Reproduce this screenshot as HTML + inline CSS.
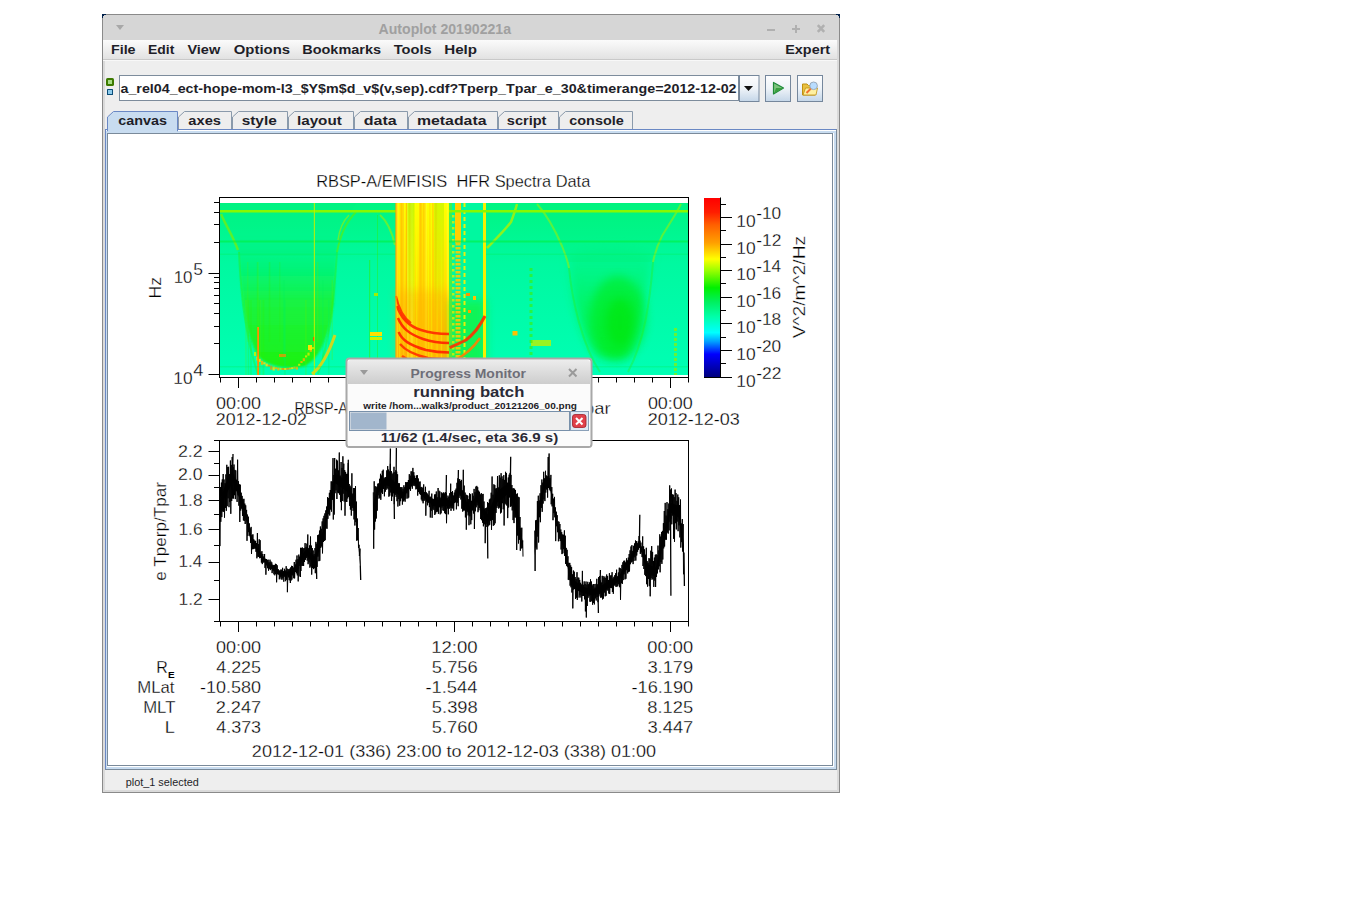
<!DOCTYPE html><html><head><meta charset="utf-8"><style>html,body{margin:0;padding:0;background:#fff;}svg{display:block;font-family:"Liberation Sans",sans-serif;}</style></head><body>
<svg width="1345" height="916" viewBox="0 0 1345 916">
<defs>
<linearGradient id="menu" x1="0" y1="0" x2="0" y2="1"><stop offset="0" stop-color="#fbfbfb"/><stop offset="1" stop-color="#e2e2e2"/></linearGradient>
<linearGradient id="btn" x1="0" y1="0" x2="0" y2="1"><stop offset="0" stop-color="#fdfdfe"/><stop offset="0.5" stop-color="#eef3f8"/><stop offset="1" stop-color="#c4d6e8"/></linearGradient>
<linearGradient id="dlgtitle" x1="0" y1="0" x2="0" y2="1"><stop offset="0" stop-color="#ececec"/><stop offset="1" stop-color="#cdcdcd"/></linearGradient>
<linearGradient id="cbar" x1="0" y1="0" x2="0" y2="1">
<stop offset="0" stop-color="#ff0000"/><stop offset="0.08" stop-color="#ff1e00"/><stop offset="0.15" stop-color="#ff6000"/><stop offset="0.25" stop-color="#ffa000"/><stop offset="0.34" stop-color="#ffff00"/><stop offset="0.40" stop-color="#a0ff00"/><stop offset="0.50" stop-color="#00f000"/><stop offset="0.58" stop-color="#00f060"/><stop offset="0.66" stop-color="#00ffa8"/><stop offset="0.75" stop-color="#00ffff"/><stop offset="0.80" stop-color="#00a0ff"/><stop offset="0.87" stop-color="#0000ff"/><stop offset="1" stop-color="#00007a"/></linearGradient>
<linearGradient id="spbase" x1="0" y1="0" x2="0" y2="1"><stop offset="0" stop-color="#00f582"/><stop offset="0.35" stop-color="#00f9a0"/><stop offset="1" stop-color="#00ffb4"/></linearGradient>
<linearGradient id="ugreen" x1="0" y1="0" x2="0" y2="1"><stop offset="0" stop-color="#00f070" stop-opacity="0.0"/><stop offset="0.2" stop-color="#00f060" stop-opacity="0.5"/><stop offset="0.5" stop-color="#20f020" stop-opacity="0.75"/><stop offset="1" stop-color="#20f000" stop-opacity="0.9"/></linearGradient>
<linearGradient id="ugreen2" x1="0" y1="0" x2="0" y2="1"><stop offset="0" stop-color="#00f080" stop-opacity="0.3"/><stop offset="0.5" stop-color="#00f040" stop-opacity="0.6"/><stop offset="1" stop-color="#00ee20" stop-opacity="0.7"/></linearGradient>
<linearGradient id="fadeg" x1="0" y1="0" x2="0" y2="1"><stop offset="0" stop-color="#a8f000" stop-opacity="0.6"/><stop offset="0.6" stop-color="#c0f000" stop-opacity="0.4"/><stop offset="1" stop-color="#c0f000" stop-opacity="0"/></linearGradient>
<filter id="blur1" x="-10%" y="-10%" width="120%" height="120%"><feGaussianBlur stdDeviation="1.2"/></filter>
<linearGradient id="ygband" x1="0" y1="0" x2="0" y2="1"><stop offset="0" stop-color="#ffff00"/><stop offset="0.5" stop-color="#ffe000"/><stop offset="1" stop-color="#ffb000"/></linearGradient>
<filter id="blur2" x="-20%" y="-20%" width="140%" height="140%"><feGaussianBlur stdDeviation="2"/></filter>
<filter id="blur4" x="-30%" y="-30%" width="160%" height="160%"><feGaussianBlur stdDeviation="5"/></filter>
<clipPath id="spclip"><rect x="220" y="203" width="468" height="172"/></clipPath>
<clipPath id="lpclip"><rect x="220" y="441" width="468" height="180"/></clipPath>
</defs>
<rect x="0" y="0" width="1345" height="916" fill="#ffffff"/>
<rect x="102" y="14" width="738" height="779" fill="#8a8a8a"/>
<rect x="103" y="15" width="736" height="777" fill="#dadada"/>
<rect x="102" y="14" width="4" height="1" fill="#00204a"/><rect x="102" y="14" width="1" height="4" fill="#00204a"/><rect x="836" y="14" width="4" height="1" fill="#00204a"/><rect x="839" y="14" width="1" height="4" fill="#00204a"/>
<rect x="105" y="40" width="732" height="750" fill="#eeeeee"/>
<rect x="103" y="15" width="736" height="25" fill="#d6d6d6"/>
<rect x="103" y="15" width="1" height="1" fill="#00204a"/><rect x="838" y="15" width="1" height="1" fill="#00204a"/>
<path d="M116 25 L124 25 L120 30 Z" fill="#a8a8a8"/>
<text x="378.55" y="33.8" font-size="14.5" font-weight="bold" fill="#a0a0a0" textLength="132.46" lengthAdjust="spacingAndGlyphs" xml:space="preserve">Autoplot 20190221a</text>
<rect x="767" y="29" width="8" height="2" fill="#b0b0b0"/>
<rect x="792" y="28" width="8" height="2" fill="#b0b0b0"/><rect x="795" y="25" width="2" height="8" fill="#b0b0b0"/>
<path d="M817.8 25.2 L824.2 31.8 M824.2 25.2 L817.8 31.8" stroke="#b0b0b0" stroke-width="2.6"/>
<rect x="103" y="40" width="734" height="19" fill="url(#menu)"/>
<rect x="103" y="59" width="734" height="1" fill="#c9c9c9"/>
<rect x="103" y="60" width="734" height="1" fill="#f8f8f8"/>
<text x="110.94" y="54" font-size="13.5" font-weight="bold" fill="#1e1e28" textLength="24.65" lengthAdjust="spacingAndGlyphs" xml:space="preserve">File</text>
<text x="147.97" y="54" font-size="13.5" font-weight="bold" fill="#1e1e28" textLength="26.30" lengthAdjust="spacingAndGlyphs" xml:space="preserve">Edit</text>
<text x="187.40" y="54" font-size="13.5" font-weight="bold" fill="#1e1e28" textLength="32.77" lengthAdjust="spacingAndGlyphs" xml:space="preserve">View</text>
<text x="233.79" y="54" font-size="13.5" font-weight="bold" fill="#1e1e28" textLength="56.22" lengthAdjust="spacingAndGlyphs" xml:space="preserve">Options</text>
<text x="302.23" y="54" font-size="13.5" font-weight="bold" fill="#1e1e28" textLength="78.86" lengthAdjust="spacingAndGlyphs" xml:space="preserve">Bookmarks</text>
<text x="393.74" y="54" font-size="13.5" font-weight="bold" fill="#1e1e28" textLength="37.94" lengthAdjust="spacingAndGlyphs" xml:space="preserve">Tools</text>
<text x="444.19" y="54" font-size="13.5" font-weight="bold" fill="#1e1e28" textLength="32.84" lengthAdjust="spacingAndGlyphs" xml:space="preserve">Help</text>
<text x="785.24" y="54" font-size="13.5" font-weight="bold" fill="#1e1e28" textLength="44.84" lengthAdjust="spacingAndGlyphs" xml:space="preserve">Expert</text>
<rect x="106" y="78" width="8" height="8" rx="1.6" fill="#3c7a00"/><rect x="108" y="80" width="4" height="4" fill="#a6dc84"/>
<rect x="107" y="89" width="6" height="6" rx="0.6" fill="#0a4c78"/><rect x="108" y="90" width="4" height="4" fill="#8ccbec"/>
<rect x="119.5" y="75.5" width="619" height="25" fill="#ffffff" stroke="#7d8c9c" stroke-width="1"/>
<text x="120.48" y="93" font-size="13.5" font-weight="bold" fill="#1e1e28" textLength="616.09" lengthAdjust="spacingAndGlyphs" xml:space="preserve">a_rel04_ect-hope-mom-l3_$Y$m$d_v$(v,sep).cdf?Tperp_Tpar_e_30&amp;timerange=2012-12-02</text>
<rect x="739.5" y="75.5" width="19.5" height="26" fill="url(#btn)" stroke="#75879c" stroke-width="1"/>
<rect x="765.5" y="75.5" width="25" height="26" fill="url(#btn)" stroke="#75879c" stroke-width="1"/>
<rect x="797.5" y="75.5" width="25" height="26" fill="url(#btn)" stroke="#75879c" stroke-width="1"/>
<path d="M744 86 L753 86 L748.5 91 Z" fill="#111"/>
<path d="M773.5 82.5 L773.5 94 L783.5 88 Z" fill="#7cc47c" stroke="#1f8a3a" stroke-width="1.2" stroke-linejoin="round"/>
<path d="M776 88 L783 88 L774 93.5 Z" fill="#3aa040"/>
<path d="M802.5 84 L807 84 L808.5 85.5 L815 85.5 L815 95 L802.5 95 Z" fill="#e8c040" stroke="#c09010" stroke-width="1"/>
<path d="M803 95 L805.5 88 L817.5 88 L816 95 Z" fill="#fff0a0" stroke="#c09010" stroke-width="0.8"/>
<circle cx="813.6" cy="85.8" r="3.8" fill="#b8dcff" stroke="#9aaabb" stroke-width="1"/>
<path d="M810.8 88.6 L806.5 93" stroke="#f07030" stroke-width="2"/>
<path d="M178.5 130 L178.5 117 L184.5 111.5 L231.5 111.5 L231.5 130" fill="#eeeeee" stroke="#8a9aab" stroke-width="1"/>
<text x="188.37" y="125" font-size="13.5" font-weight="bold" fill="#1e1e28" textLength="32.63" lengthAdjust="spacingAndGlyphs" xml:space="preserve">axes</text>
<path d="M232.5 130 L232.5 117 L238.5 111.5 L287.5 111.5 L287.5 130" fill="#eeeeee" stroke="#8a9aab" stroke-width="1"/>
<text x="241.66" y="125" font-size="13.5" font-weight="bold" fill="#1e1e28" textLength="35.07" lengthAdjust="spacingAndGlyphs" xml:space="preserve">style</text>
<path d="M288.5 130 L288.5 117 L294.5 111.5 L353.5 111.5 L353.5 130" fill="#eeeeee" stroke="#8a9aab" stroke-width="1"/>
<text x="296.94" y="125" font-size="13.5" font-weight="bold" fill="#1e1e28" textLength="44.85" lengthAdjust="spacingAndGlyphs" xml:space="preserve">layout</text>
<path d="M354.5 130 L354.5 117 L360.5 111.5 L407.5 111.5 L407.5 130" fill="#eeeeee" stroke="#8a9aab" stroke-width="1"/>
<text x="363.84" y="125" font-size="13.5" font-weight="bold" fill="#1e1e28" textLength="32.96" lengthAdjust="spacingAndGlyphs" xml:space="preserve">data</text>
<path d="M408.5 130 L408.5 117 L414.5 111.5 L497.5 111.5 L497.5 130" fill="#eeeeee" stroke="#8a9aab" stroke-width="1"/>
<text x="416.96" y="125" font-size="13.5" font-weight="bold" fill="#1e1e28" textLength="69.54" lengthAdjust="spacingAndGlyphs" xml:space="preserve">metadata</text>
<path d="M498.5 130 L498.5 117 L504.5 111.5 L558.5 111.5 L558.5 130" fill="#eeeeee" stroke="#8a9aab" stroke-width="1"/>
<text x="506.79" y="125" font-size="13.5" font-weight="bold" fill="#1e1e28" textLength="39.69" lengthAdjust="spacingAndGlyphs" xml:space="preserve">script</text>
<path d="M559.5 130 L559.5 117 L565.5 111.5 L632.5 111.5 L632.5 130" fill="#eeeeee" stroke="#8a9aab" stroke-width="1"/>
<text x="569.24" y="125" font-size="13.5" font-weight="bold" fill="#1e1e28" textLength="54.56" lengthAdjust="spacingAndGlyphs" xml:space="preserve">console</text>
<rect x="105" y="129" width="732" height="641" fill="#7a8a9a"/>
<rect x="105" y="129" width="731" height="1" fill="#6a88c4"/><rect x="105" y="129" width="1" height="640" fill="#6a88c4"/>
<rect x="106" y="130" width="730" height="639" fill="#c8dcf0"/>
<rect x="106" y="130" width="730" height="1" fill="#ffffff"/>
<rect x="107" y="133" width="727" height="634" fill="#ffffff"/>
<rect x="107" y="133" width="726" height="633" fill="#7a8a9a"/>
<rect x="108" y="134" width="724" height="631" fill="#ffffff"/>
<path d="M107.5 131 L107.5 117 L113.5 111.5 L177.5 111.5 L177.5 131 Z" fill="#c8dcf0" stroke="#6a88c4" stroke-width="1"/>
<rect x="108" y="129" width="69" height="4" fill="#c8dcf0"/>
<text x="118.24" y="125" font-size="13.5" font-weight="bold" fill="#1e1e28" textLength="48.65" lengthAdjust="spacingAndGlyphs" xml:space="preserve">canvas</text>
<text x="125.80" y="786" font-size="11" fill="#1e1e28" textLength="72.90" lengthAdjust="spacingAndGlyphs" xml:space="preserve">plot_1 selected</text>
<g clip-path="url(#spclip)">
<rect x="219" y="203" width="470" height="172" fill="url(#spbase)"/>
<path d="M219 203 L219 212 C224 222 232 236 240 256 L336 256 C340 236 350 214 356 203 Z" fill="#00f080" opacity="0.35"/>
<path d="M238 236 C241 300 246 335 258 356 C270 368 290 370 305 366 C320 358 330 335 334 300 L337 236 Z" fill="url(#ugreen)" filter="url(#blur1)"/>
<rect x="258.5" y="300" width="1.5" height="80" fill="#30f000" opacity="0.25"/>
<rect x="268.8" y="262" width="1.5" height="80" fill="#30f000" opacity="0.25"/>
<rect x="260.2" y="300" width="1" height="80" fill="#60f000" opacity="0.25"/>
<rect x="245.2" y="300" width="1.5" height="80" fill="#60f000" opacity="0.25"/>
<rect x="256.8" y="262" width="1" height="80" fill="#30f000" opacity="0.25"/>
<rect x="247.7" y="300" width="1.5" height="80" fill="#30f000" opacity="0.25"/>
<rect x="282.9" y="280" width="2" height="80" fill="#00f060" opacity="0.25"/>
<rect x="305.1" y="300" width="1.5" height="80" fill="#60f000" opacity="0.25"/>
<rect x="257.6" y="262" width="1" height="80" fill="#60f000" opacity="0.25"/>
<rect x="283.9" y="300" width="2" height="80" fill="#00f060" opacity="0.25"/>
<rect x="279.3" y="262" width="1" height="80" fill="#30f000" opacity="0.25"/>
<rect x="247.3" y="262" width="1" height="80" fill="#60f000" opacity="0.25"/>
<rect x="262.4" y="300" width="2" height="80" fill="#30f000" opacity="0.25"/>
<rect x="250.2" y="300" width="1.5" height="80" fill="#30f000" opacity="0.25"/>
<rect x="316.8" y="262" width="1.5" height="80" fill="#60f000" opacity="0.25"/>
<rect x="322.1" y="280" width="1.5" height="80" fill="#00f060" opacity="0.25"/>
<rect x="328.0" y="300" width="1.5" height="80" fill="#00f060" opacity="0.25"/>
<rect x="331.5" y="280" width="1.5" height="80" fill="#60f000" opacity="0.25"/>
<path d="M569 256 C571 296 579 332 595 354 C602 360 618 362 628 355 C636 340 645 300 652 256 C630 244 590 244 569 256 Z" fill="url(#ugreen2)" filter="url(#blur4)"/>
<ellipse cx="618" cy="318" rx="28" ry="42" fill="#00e800" opacity="0.45" filter="url(#blur4)"/>
<ellipse cx="620" cy="322" rx="14" ry="24" fill="#00e400" opacity="0.5" filter="url(#blur4)"/>
<path d="M540 203 C552 225 562 245 568 262 L652 262 C658 245 668 225 682 203 Z" fill="#00f070" opacity="0.25"/>
<path d="M221 214 C226 226 232 234 238 250" fill="none" stroke="#80f000" stroke-width="2.5" stroke-opacity="0.7"/>
<path d="M239 252 C241 300 246 340 258 374" fill="none" stroke="#30f000" stroke-width="2.0" stroke-opacity="0.35"/>
<path d="M356 212 C346 222 340 236 337 252" fill="none" stroke="#60f000" stroke-width="2" stroke-opacity="0.6"/>
<path d="M349 215 C342 222 339 232 338 240" fill="none" stroke="#a0f000" stroke-width="1.5" stroke-opacity="0.6"/>
<path d="M380 215 C388 222 392 232 395 245" fill="none" stroke="#a0f000" stroke-width="2" stroke-opacity="0.6"/>
<path d="M337 252 C334 300 330 340 318 374" fill="none" stroke="#30f000" stroke-width="2.0" stroke-opacity="0.35"/>
<path d="M537 204 C546 214 556 232 562 246 C566 256 568 262 569 268" fill="none" stroke="#a0f000" stroke-width="2" stroke-opacity="0.55"/>
<path d="M569 268 C572 300 582 345 600 372" fill="none" stroke="#30f000" stroke-width="2.0" stroke-opacity="0.3"/>
<path d="M681 204 C676 214 668 226 662 236 C658 244 655 252 653 262" fill="none" stroke="#a0f000" stroke-width="2" stroke-opacity="0.55"/>
<path d="M653 262 C650 300 645 340 628 372" fill="none" stroke="#30f000" stroke-width="2.0" stroke-opacity="0.3"/>
<path d="M487 248 C495 240 505 230 511 222 C514 214 516 208 517 204" fill="none" stroke="#b0f000" stroke-width="2.5" stroke-opacity="0.8"/>
<rect x="254.0" y="352.0" width="2.2" height="4" fill="#d0f000" opacity="0.85"/>
<rect x="256.3" y="356.6" width="2.2" height="4" fill="#d0f000" opacity="0.85"/>
<rect x="258.6" y="358.9" width="2.2" height="3" fill="#ffe000" opacity="0.85"/>
<rect x="261.0" y="360.8" width="2.2" height="4" fill="#ffb000" opacity="0.85"/>
<rect x="263.3" y="362.3" width="2.2" height="2" fill="#ffe000" opacity="0.85"/>
<rect x="265.6" y="363.6" width="2.2" height="3" fill="#ffe000" opacity="0.85"/>
<rect x="267.9" y="364.7" width="2.2" height="2" fill="#ff9000" opacity="0.85"/>
<rect x="270.2" y="365.7" width="2.2" height="4" fill="#ff9000" opacity="0.85"/>
<rect x="272.6" y="366.5" width="2.2" height="4" fill="#ffe000" opacity="0.85"/>
<rect x="274.9" y="367.1" width="2.2" height="2" fill="#ffb000" opacity="0.85"/>
<rect x="277.2" y="367.5" width="2.2" height="3" fill="#ffb000" opacity="0.85"/>
<rect x="279.5" y="367.8" width="2.2" height="2" fill="#d0f000" opacity="0.85"/>
<rect x="281.8" y="368.0" width="2.2" height="2" fill="#ff9000" opacity="0.85"/>
<rect x="284.2" y="368.0" width="2.2" height="2" fill="#ffe000" opacity="0.85"/>
<rect x="286.5" y="367.8" width="2.2" height="2" fill="#ff9000" opacity="0.85"/>
<rect x="288.8" y="367.5" width="2.2" height="2" fill="#ffb000" opacity="0.85"/>
<rect x="291.1" y="367.1" width="2.2" height="2" fill="#ffe000" opacity="0.85"/>
<rect x="293.4" y="366.5" width="2.2" height="2" fill="#ffb000" opacity="0.85"/>
<rect x="295.8" y="366.6" width="2.2" height="3" fill="#ffb000" opacity="0.85"/>
<rect x="298.1" y="363.8" width="2.2" height="2" fill="#d0f000" opacity="0.85"/>
<rect x="300.4" y="361.0" width="2.2" height="2" fill="#ffb000" opacity="0.85"/>
<rect x="302.7" y="358.2" width="2.2" height="3" fill="#ffb000" opacity="0.85"/>
<rect x="305.0" y="355.4" width="2.2" height="2" fill="#d0f000" opacity="0.85"/>
<rect x="307.4" y="352.6" width="2.2" height="3" fill="#d0f000" opacity="0.85"/>
<rect x="309.7" y="349.8" width="2.2" height="2" fill="#ffb000" opacity="0.85"/>
<rect x="312.0" y="347.0" width="2.2" height="2" fill="#d0f000" opacity="0.85"/>
<rect x="279" y="354" width="7" height="3" fill="#ff9000" opacity="0.7"/>
<rect x="308" y="345" width="4" height="5" fill="#ffe000"/><rect x="313" y="337" width="2" height="4" fill="#ff4000"/>
<path d="M312 374 C320 368 328 355 335 335" fill="none" stroke="#ffd000" stroke-width="3" opacity="0.8"/>
<rect x="219" y="210" width="470" height="2.5" fill="#88f800"/>
<rect x="219" y="240.5" width="470" height="2" fill="#00f040" opacity="0.6"/>
<rect x="219" y="253.5" width="470" height="1.5" fill="#00f060" opacity="0.35"/>
<rect x="313.8" y="203" width="1.2" height="172" fill="#c0f000" opacity="0.85"/>
<rect x="257.2" y="327" width="1.8" height="48" fill="#ff9000"/>
<rect x="369" y="260" width="1.2" height="115" fill="#30f000" opacity="0.5"/>
<rect x="377" y="215" width="1" height="160" fill="#30f000" opacity="0.4"/>
<rect x="396" y="203" width="53" height="172" fill="url(#ygband)"/>
<rect x="420.0" y="203" width="1.5" height="172" fill="#ffb000" opacity="0.7"/>
<rect x="419.9" y="203" width="1.0" height="172" fill="#ffb000" opacity="0.7"/>
<rect x="405.8" y="203" width="1.5" height="172" fill="#ffb000" opacity="0.7"/>
<rect x="429.4" y="203" width="1.0" height="172" fill="#ffc800" opacity="0.7"/>
<rect x="419.7" y="203" width="1.0" height="172" fill="#ffc800" opacity="0.7"/>
<rect x="424.6" y="203" width="2.0" height="172" fill="#ffff30" opacity="0.7"/>
<rect x="448.1" y="203" width="2.0" height="172" fill="#f8ff00" opacity="0.7"/>
<rect x="435.2" y="203" width="2.0" height="172" fill="#ffc800" opacity="0.7"/>
<rect x="396.8" y="203" width="1.0" height="172" fill="#ffb000" opacity="0.7"/>
<rect x="399.2" y="203" width="1.0" height="172" fill="#ffc800" opacity="0.7"/>
<rect x="427.8" y="203" width="1.5" height="172" fill="#f8ff00" opacity="0.7"/>
<rect x="419.3" y="203" width="2.0" height="172" fill="#ffc800" opacity="0.7"/>
<rect x="408.4" y="203" width="1.5" height="172" fill="#ffe800" opacity="0.7"/>
<rect x="396.2" y="203" width="1.5" height="172" fill="#ffff30" opacity="0.7"/>
<rect x="430.7" y="203" width="2.0" height="172" fill="#f8ff00" opacity="0.7"/>
<rect x="448.8" y="203" width="2.0" height="172" fill="#ffff30" opacity="0.7"/>
<rect x="409.5" y="203" width="2.0" height="172" fill="#ffc800" opacity="0.7"/>
<rect x="411.3" y="203" width="2.0" height="172" fill="#ffff30" opacity="0.7"/>
<rect x="436.6" y="203" width="1.0" height="172" fill="#f8ff00" opacity="0.7"/>
<rect x="440.9" y="203" width="1.0" height="172" fill="#f8ff00" opacity="0.7"/>
<rect x="446.8" y="203" width="1.0" height="172" fill="#ffff30" opacity="0.7"/>
<rect x="407.1" y="203" width="1.5" height="172" fill="#ffff30" opacity="0.7"/>
<rect x="415.9" y="203" width="1.5" height="172" fill="#f8ff00" opacity="0.7"/>
<rect x="399.9" y="203" width="2.0" height="172" fill="#ffc800" opacity="0.7"/>
<rect x="410.3" y="203" width="1.5" height="172" fill="#ffff30" opacity="0.7"/>
<rect x="413.6" y="203" width="1.0" height="172" fill="#f8ff00" opacity="0.7"/>
<rect x="403.1" y="203" width="1.0" height="172" fill="#ffff30" opacity="0.7"/>
<rect x="399.2" y="203" width="1.0" height="172" fill="#f8ff00" opacity="0.7"/>
<rect x="432.2" y="203" width="1.5" height="172" fill="#ffc800" opacity="0.7"/>
<rect x="423.0" y="203" width="1.5" height="172" fill="#ffc800" opacity="0.7"/>
<rect x="449" y="203" width="37" height="172" fill="#00f8a0"/>
<rect x="449" y="300" width="37" height="75" fill="#20f000" opacity="0.45" filter="url(#blur4)"/>
<rect x="449" y="203" width="3" height="172" fill="#60f020" opacity="0.6"/>
<rect x="455" y="203" width="6" height="40" fill="#ffd000"/>
<rect x="455.5" y="243" width="5" height="2.5" fill="#ffc800" opacity="0.9"/>
<rect x="455.5" y="247" width="5" height="2.5" fill="#ffc800" opacity="0.9"/>
<rect x="455.5" y="251" width="5" height="2.5" fill="#ffc800" opacity="0.9"/>
<rect x="455.5" y="255" width="5" height="2.5" fill="#ffc800" opacity="0.9"/>
<rect x="455.5" y="259" width="5" height="2.5" fill="#ffc800" opacity="0.9"/>
<rect x="455.5" y="263" width="5" height="2.5" fill="#ffc800" opacity="0.9"/>
<rect x="455.5" y="267" width="5" height="2.5" fill="#ffc800" opacity="0.9"/>
<rect x="455.5" y="271" width="5" height="2.5" fill="#ffc800" opacity="0.9"/>
<rect x="455.5" y="275" width="5" height="2.5" fill="#ffc800" opacity="0.9"/>
<rect x="455.5" y="279" width="5" height="2.5" fill="#ffc800" opacity="0.9"/>
<rect x="455.5" y="283" width="5" height="2.5" fill="#ffc800" opacity="0.9"/>
<rect x="455.5" y="287" width="5" height="2.5" fill="#ffc800" opacity="0.9"/>
<rect x="455.5" y="291" width="5" height="2.5" fill="#ffc800" opacity="0.9"/>
<rect x="455.5" y="295" width="5" height="2.5" fill="#ffc800" opacity="0.9"/>
<rect x="455.5" y="299" width="5" height="2.5" fill="#ffc800" opacity="0.9"/>
<rect x="455.5" y="303" width="5" height="2.5" fill="#ffc800" opacity="0.9"/>
<rect x="455.5" y="307" width="5" height="2.5" fill="#ffc800" opacity="0.9"/>
<rect x="455.5" y="311" width="5" height="2.5" fill="#ffc800" opacity="0.9"/>
<rect x="455.5" y="315" width="5" height="2.5" fill="#ffc800" opacity="0.9"/>
<rect x="455.5" y="319" width="5" height="2.5" fill="#ffc800" opacity="0.9"/>
<rect x="455.5" y="323" width="5" height="2.5" fill="#ffc800" opacity="0.9"/>
<rect x="455.5" y="327" width="5" height="2.5" fill="#ffc800" opacity="0.9"/>
<rect x="455.5" y="331" width="5" height="2.5" fill="#ffc800" opacity="0.9"/>
<rect x="455.5" y="335" width="5" height="2.5" fill="#ffc800" opacity="0.9"/>
<rect x="455.5" y="339" width="5" height="2.5" fill="#ffc800" opacity="0.9"/>
<rect x="455.5" y="343" width="5" height="2.5" fill="#ffc800" opacity="0.9"/>
<rect x="455.5" y="347" width="5" height="2.5" fill="#ffc800" opacity="0.9"/>
<rect x="455.5" y="351" width="5" height="2.5" fill="#ffc800" opacity="0.9"/>
<rect x="455.5" y="355" width="5" height="2.5" fill="#ffc800" opacity="0.9"/>
<rect x="455.5" y="359" width="5" height="2.5" fill="#ffc800" opacity="0.9"/>
<rect x="455.5" y="363" width="5" height="2.5" fill="#ffc800" opacity="0.9"/>
<rect x="455.5" y="367" width="5" height="2.5" fill="#ffc800" opacity="0.9"/>
<rect x="455.5" y="371" width="5" height="2.5" fill="#ffc800" opacity="0.9"/>
<rect x="452" y="215" width="2.5" height="2.5" fill="#e0f000" opacity="0.8"/>
<rect x="452" y="221" width="2.5" height="2.5" fill="#e0f000" opacity="0.8"/>
<rect x="452" y="227" width="2.5" height="2.5" fill="#e0f000" opacity="0.8"/>
<rect x="452" y="233" width="2.5" height="2.5" fill="#e0f000" opacity="0.8"/>
<rect x="452" y="239" width="2.5" height="2.5" fill="#e0f000" opacity="0.8"/>
<rect x="452" y="245" width="2.5" height="2.5" fill="#e0f000" opacity="0.8"/>
<rect x="452" y="251" width="2.5" height="2.5" fill="#e0f000" opacity="0.8"/>
<rect x="452" y="257" width="2.5" height="2.5" fill="#e0f000" opacity="0.8"/>
<rect x="452" y="263" width="2.5" height="2.5" fill="#e0f000" opacity="0.8"/>
<rect x="452" y="269" width="2.5" height="2.5" fill="#e0f000" opacity="0.8"/>
<rect x="452" y="275" width="2.5" height="2.5" fill="#e0f000" opacity="0.8"/>
<rect x="452" y="281" width="2.5" height="2.5" fill="#e0f000" opacity="0.8"/>
<rect x="452" y="287" width="2.5" height="2.5" fill="#e0f000" opacity="0.8"/>
<rect x="452" y="293" width="2.5" height="2.5" fill="#e0f000" opacity="0.8"/>
<rect x="452" y="299" width="2.5" height="2.5" fill="#e0f000" opacity="0.8"/>
<rect x="452" y="305" width="2.5" height="2.5" fill="#e0f000" opacity="0.8"/>
<rect x="452" y="311" width="2.5" height="2.5" fill="#e0f000" opacity="0.8"/>
<rect x="452" y="317" width="2.5" height="2.5" fill="#e0f000" opacity="0.8"/>
<rect x="452" y="323" width="2.5" height="2.5" fill="#e0f000" opacity="0.8"/>
<rect x="452" y="329" width="2.5" height="2.5" fill="#e0f000" opacity="0.8"/>
<rect x="452" y="335" width="2.5" height="2.5" fill="#e0f000" opacity="0.8"/>
<rect x="452" y="341" width="2.5" height="2.5" fill="#e0f000" opacity="0.8"/>
<rect x="452" y="347" width="2.5" height="2.5" fill="#e0f000" opacity="0.8"/>
<rect x="452" y="353" width="2.5" height="2.5" fill="#e0f000" opacity="0.8"/>
<rect x="452" y="359" width="2.5" height="2.5" fill="#e0f000" opacity="0.8"/>
<rect x="452" y="365" width="2.5" height="2.5" fill="#e0f000" opacity="0.8"/>
<rect x="452" y="371" width="2.5" height="2.5" fill="#e0f000" opacity="0.8"/>
<rect x="463.5" y="203" width="2" height="4" fill="#ffee00" opacity="0.9"/>
<rect x="463.5" y="210" width="2" height="4" fill="#ffee00" opacity="0.9"/>
<rect x="463.5" y="217" width="2" height="4" fill="#ffee00" opacity="0.9"/>
<rect x="463.5" y="224" width="2" height="4" fill="#ffee00" opacity="0.9"/>
<rect x="463.5" y="231" width="2" height="4" fill="#ffee00" opacity="0.9"/>
<rect x="463.5" y="238" width="2" height="4" fill="#ffee00" opacity="0.9"/>
<rect x="463.5" y="245" width="2" height="4" fill="#ffee00" opacity="0.9"/>
<rect x="463.5" y="252" width="2" height="4" fill="#ffee00" opacity="0.9"/>
<rect x="463.5" y="259" width="2" height="4" fill="#ffee00" opacity="0.9"/>
<rect x="463.5" y="266" width="2" height="4" fill="#ffee00" opacity="0.9"/>
<rect x="463.5" y="273" width="2" height="4" fill="#ffee00" opacity="0.9"/>
<rect x="463.5" y="280" width="2" height="4" fill="#ffee00" opacity="0.9"/>
<rect x="463.5" y="287" width="2" height="4" fill="#ffee00" opacity="0.9"/>
<rect x="463.5" y="294" width="2" height="4" fill="#ffee00" opacity="0.9"/>
<rect x="463.5" y="301" width="2" height="4" fill="#ffee00" opacity="0.9"/>
<rect x="463.5" y="308" width="2" height="4" fill="#ffee00" opacity="0.9"/>
<rect x="463.5" y="315" width="2" height="4" fill="#ffee00" opacity="0.9"/>
<rect x="463.5" y="322" width="2" height="4" fill="#ffee00" opacity="0.9"/>
<rect x="463.5" y="329" width="2" height="4" fill="#ffee00" opacity="0.9"/>
<rect x="463.5" y="336" width="2" height="4" fill="#ffee00" opacity="0.9"/>
<rect x="463.5" y="343" width="2" height="4" fill="#ffee00" opacity="0.9"/>
<rect x="463.5" y="350" width="2" height="4" fill="#ffee00" opacity="0.9"/>
<rect x="463.5" y="357" width="2" height="4" fill="#ffee00" opacity="0.9"/>
<rect x="463.5" y="364" width="2" height="4" fill="#ffee00" opacity="0.9"/>
<rect x="463.5" y="371" width="2" height="4" fill="#ffee00" opacity="0.9"/>
<rect x="483" y="203" width="3" height="172" fill="#f8f000"/>
<rect x="407.5" y="203" width="7" height="130" fill="url(#fadeg)"/>
<rect x="434" y="203" width="10" height="120" fill="url(#fadeg)" opacity="0.8"/>
<rect x="401" y="203" width="3" height="172" fill="#ffc000" opacity="0.6"/>
<rect x="420" y="203" width="6" height="172" fill="#ffd000" opacity="0.5"/>
<rect x="449" y="210" width="37" height="2.5" fill="#88f800"/><rect x="449" y="240.5" width="37" height="2" fill="#00f040" opacity="0.6"/>
<path d="M396 290 L449 290 L449 375 L396 375 Z" fill="#ffa000" opacity="0.3" filter="url(#blur4)"/>
<path d="M396 296 C399 310 404 318 411 323" fill="none" stroke="#ff3000" stroke-width="2" opacity="0.9"/>
<path d="M397 306 C401 318 408 326 421 330 C430 333 440 334 449 334" fill="none" stroke="#ff2800" stroke-width="2.5" opacity="0.9"/>
<path d="M398 318 C402 328 409 334 423 339 C432 342 441 343 449 343" fill="none" stroke="#ff2000" stroke-width="2.5" opacity="0.9"/>
<path d="M398.6 332 C402 340 409 345 426 350 C435 352 442 352.5 449 352.5" fill="none" stroke="#ff2000" stroke-width="2.5" opacity="0.9"/>
<path d="M400 344 C405 350 414 355 428 358 C436 359 445 359 452 359" fill="none" stroke="#ff3000" stroke-width="2.5" opacity="0.9"/>
<path d="M402 356 C410 362 420 366 445 368" fill="none" stroke="#ff4000" stroke-width="2.5" opacity="0.9"/>
<path d="M406 368 C414 371 425 374 445 375" fill="none" stroke="#ff5000" stroke-width="2" opacity="0.9"/>
<path d="M449.6 347.6 C456 345 462 342 466 340 C474 334 480 326 485 316" fill="none" stroke="#ff3000" stroke-width="3" opacity="0.9"/>
<path d="M452 362 C462 357 472 350 480 338" fill="none" stroke="#ff8000" stroke-width="2.5" opacity="0.9"/>
<rect x="466" y="293" width="4" height="3" fill="#ff9000"/><rect x="468" y="310" width="3" height="3" fill="#ffa000"/><rect x="473" y="296" width="3" height="4" fill="#ffc000"/>
<rect x="370" y="332" width="12" height="4" fill="#ffe000"/><rect x="370" y="337" width="12" height="3" fill="#d0f000"/><rect x="374" y="293" width="4" height="3" fill="#a0f000"/>
<rect x="512.5" y="331" width="5" height="4.5" fill="#ffc000"/>
<rect x="531" y="340" width="20" height="6" fill="#c0f000" opacity="0.8"/>
<rect x="529.5" y="268" width="3" height="3" fill="#40f000" opacity="0.6"/>
<rect x="529.5" y="274" width="3" height="3" fill="#40f000" opacity="0.6"/>
<rect x="529.5" y="280" width="3" height="3" fill="#40f000" opacity="0.6"/>
<rect x="529.5" y="286" width="3" height="3" fill="#40f000" opacity="0.6"/>
<rect x="529.5" y="292" width="3" height="3" fill="#40f000" opacity="0.6"/>
<rect x="529.5" y="298" width="3" height="3" fill="#40f000" opacity="0.6"/>
<rect x="529.5" y="304" width="3" height="3" fill="#40f000" opacity="0.6"/>
<rect x="529.5" y="310" width="3" height="3" fill="#40f000" opacity="0.6"/>
<rect x="529.5" y="316" width="3" height="3" fill="#40f000" opacity="0.6"/>
<rect x="529.5" y="322" width="3" height="3" fill="#40f000" opacity="0.6"/>
<rect x="529.5" y="328" width="3" height="3" fill="#40f000" opacity="0.6"/>
<rect x="529.5" y="334" width="3" height="3" fill="#40f000" opacity="0.6"/>
<rect x="529.5" y="340" width="3" height="3" fill="#40f000" opacity="0.6"/>
<rect x="529.5" y="346" width="3" height="3" fill="#40f000" opacity="0.6"/>
<rect x="529.5" y="352" width="3" height="3" fill="#40f000" opacity="0.6"/>
<rect x="529.5" y="358" width="3" height="3" fill="#40f000" opacity="0.6"/>
<rect x="529.5" y="364" width="3" height="3" fill="#40f000" opacity="0.6"/>
<rect x="529.5" y="370" width="3" height="3" fill="#40f000" opacity="0.6"/>
<rect x="395" y="203" width="2" height="172" fill="#ffa000" opacity="0.6"/>
<rect x="674" y="328" width="3" height="3" fill="#90f000" opacity="0.7"/>
<rect x="674" y="333" width="3" height="3" fill="#90f000" opacity="0.7"/>
<rect x="674" y="338" width="3" height="3" fill="#90f000" opacity="0.7"/>
<rect x="674" y="343" width="3" height="3" fill="#90f000" opacity="0.7"/>
<rect x="674" y="348" width="3" height="3" fill="#90f000" opacity="0.7"/>
<rect x="674" y="353" width="3" height="3" fill="#90f000" opacity="0.7"/>
<rect x="674" y="358" width="3" height="3" fill="#90f000" opacity="0.7"/>
<rect x="674" y="363" width="3" height="3" fill="#90f000" opacity="0.7"/>
<rect x="674" y="368" width="3" height="3" fill="#90f000" opacity="0.7"/>
<rect x="674" y="373" width="3" height="3" fill="#90f000" opacity="0.7"/>
<rect x="219" y="366" width="470" height="1.5" fill="#00f060" opacity="0.3"/>
</g>
<rect x="219.5" y="197.5" width="469" height="180" fill="none" stroke="#000" stroke-width="1"/>
<line x1="208.5" y1="374.5" x2="219.5" y2="374.5" stroke="#000" stroke-width="1"/>
<line x1="214.0" y1="343.5" x2="219.5" y2="343.5" stroke="#000" stroke-width="1"/>
<line x1="214.0" y1="326.5" x2="219.5" y2="326.5" stroke="#000" stroke-width="1"/>
<line x1="214.0" y1="313.5" x2="219.5" y2="313.5" stroke="#000" stroke-width="1"/>
<line x1="214.0" y1="303.5" x2="219.5" y2="303.5" stroke="#000" stroke-width="1"/>
<line x1="214.0" y1="295.5" x2="219.5" y2="295.5" stroke="#000" stroke-width="1"/>
<line x1="214.0" y1="288.5" x2="219.5" y2="288.5" stroke="#000" stroke-width="1"/>
<line x1="214.0" y1="282.5" x2="219.5" y2="282.5" stroke="#000" stroke-width="1"/>
<line x1="214.0" y1="277.5" x2="219.5" y2="277.5" stroke="#000" stroke-width="1"/>
<line x1="208.5" y1="273.5" x2="219.5" y2="273.5" stroke="#000" stroke-width="1"/>
<line x1="214.0" y1="242.5" x2="219.5" y2="242.5" stroke="#000" stroke-width="1"/>
<line x1="214.0" y1="224.5" x2="219.5" y2="224.5" stroke="#000" stroke-width="1"/>
<line x1="214.0" y1="212.5" x2="219.5" y2="212.5" stroke="#000" stroke-width="1"/>
<line x1="214.0" y1="202.5" x2="219.5" y2="202.5" stroke="#000" stroke-width="1"/>
<line x1="220.5" y1="377" x2="220.5" y2="382.5" stroke="#000" stroke-width="1"/>
<line x1="220.5" y1="621" x2="220.5" y2="626.5" stroke="#000" stroke-width="1"/>
<line x1="238.5" y1="377" x2="238.5" y2="388" stroke="#000" stroke-width="1"/>
<line x1="238.5" y1="621" x2="238.5" y2="632" stroke="#000" stroke-width="1"/>
<line x1="256.5" y1="377" x2="256.5" y2="382.5" stroke="#000" stroke-width="1"/>
<line x1="256.5" y1="621" x2="256.5" y2="626.5" stroke="#000" stroke-width="1"/>
<line x1="274.5" y1="377" x2="274.5" y2="382.5" stroke="#000" stroke-width="1"/>
<line x1="274.5" y1="621" x2="274.5" y2="626.5" stroke="#000" stroke-width="1"/>
<line x1="292.5" y1="377" x2="292.5" y2="382.5" stroke="#000" stroke-width="1"/>
<line x1="292.5" y1="621" x2="292.5" y2="626.5" stroke="#000" stroke-width="1"/>
<line x1="310.5" y1="377" x2="310.5" y2="382.5" stroke="#000" stroke-width="1"/>
<line x1="310.5" y1="621" x2="310.5" y2="626.5" stroke="#000" stroke-width="1"/>
<line x1="328.5" y1="377" x2="328.5" y2="382.5" stroke="#000" stroke-width="1"/>
<line x1="328.5" y1="621" x2="328.5" y2="626.5" stroke="#000" stroke-width="1"/>
<line x1="346.5" y1="377" x2="346.5" y2="382.5" stroke="#000" stroke-width="1"/>
<line x1="346.5" y1="621" x2="346.5" y2="626.5" stroke="#000" stroke-width="1"/>
<line x1="364.5" y1="377" x2="364.5" y2="382.5" stroke="#000" stroke-width="1"/>
<line x1="364.5" y1="621" x2="364.5" y2="626.5" stroke="#000" stroke-width="1"/>
<line x1="382.5" y1="377" x2="382.5" y2="382.5" stroke="#000" stroke-width="1"/>
<line x1="382.5" y1="621" x2="382.5" y2="626.5" stroke="#000" stroke-width="1"/>
<line x1="400.5" y1="377" x2="400.5" y2="382.5" stroke="#000" stroke-width="1"/>
<line x1="400.5" y1="621" x2="400.5" y2="626.5" stroke="#000" stroke-width="1"/>
<line x1="418.5" y1="377" x2="418.5" y2="382.5" stroke="#000" stroke-width="1"/>
<line x1="418.5" y1="621" x2="418.5" y2="626.5" stroke="#000" stroke-width="1"/>
<line x1="436.5" y1="377" x2="436.5" y2="382.5" stroke="#000" stroke-width="1"/>
<line x1="436.5" y1="621" x2="436.5" y2="626.5" stroke="#000" stroke-width="1"/>
<line x1="454.5" y1="377" x2="454.5" y2="388" stroke="#000" stroke-width="1"/>
<line x1="454.5" y1="621" x2="454.5" y2="632" stroke="#000" stroke-width="1"/>
<line x1="472.5" y1="377" x2="472.5" y2="382.5" stroke="#000" stroke-width="1"/>
<line x1="472.5" y1="621" x2="472.5" y2="626.5" stroke="#000" stroke-width="1"/>
<line x1="490.5" y1="377" x2="490.5" y2="382.5" stroke="#000" stroke-width="1"/>
<line x1="490.5" y1="621" x2="490.5" y2="626.5" stroke="#000" stroke-width="1"/>
<line x1="508.5" y1="377" x2="508.5" y2="382.5" stroke="#000" stroke-width="1"/>
<line x1="508.5" y1="621" x2="508.5" y2="626.5" stroke="#000" stroke-width="1"/>
<line x1="526.5" y1="377" x2="526.5" y2="382.5" stroke="#000" stroke-width="1"/>
<line x1="526.5" y1="621" x2="526.5" y2="626.5" stroke="#000" stroke-width="1"/>
<line x1="544.5" y1="377" x2="544.5" y2="382.5" stroke="#000" stroke-width="1"/>
<line x1="544.5" y1="621" x2="544.5" y2="626.5" stroke="#000" stroke-width="1"/>
<line x1="562.5" y1="377" x2="562.5" y2="382.5" stroke="#000" stroke-width="1"/>
<line x1="562.5" y1="621" x2="562.5" y2="626.5" stroke="#000" stroke-width="1"/>
<line x1="580.5" y1="377" x2="580.5" y2="382.5" stroke="#000" stroke-width="1"/>
<line x1="580.5" y1="621" x2="580.5" y2="626.5" stroke="#000" stroke-width="1"/>
<line x1="598.5" y1="377" x2="598.5" y2="382.5" stroke="#000" stroke-width="1"/>
<line x1="598.5" y1="621" x2="598.5" y2="626.5" stroke="#000" stroke-width="1"/>
<line x1="616.5" y1="377" x2="616.5" y2="382.5" stroke="#000" stroke-width="1"/>
<line x1="616.5" y1="621" x2="616.5" y2="626.5" stroke="#000" stroke-width="1"/>
<line x1="634.5" y1="377" x2="634.5" y2="382.5" stroke="#000" stroke-width="1"/>
<line x1="634.5" y1="621" x2="634.5" y2="626.5" stroke="#000" stroke-width="1"/>
<line x1="652.5" y1="377" x2="652.5" y2="382.5" stroke="#000" stroke-width="1"/>
<line x1="652.5" y1="621" x2="652.5" y2="626.5" stroke="#000" stroke-width="1"/>
<line x1="670.5" y1="377" x2="670.5" y2="388" stroke="#000" stroke-width="1"/>
<line x1="670.5" y1="621" x2="670.5" y2="632" stroke="#000" stroke-width="1"/>
<line x1="688.5" y1="377" x2="688.5" y2="382.5" stroke="#000" stroke-width="1"/>
<line x1="688.5" y1="621" x2="688.5" y2="626.5" stroke="#000" stroke-width="1"/>
<text x="173.71" y="282.9" font-size="17" fill="#000" stroke="#fff" stroke-width="0.28" textLength="18.85" lengthAdjust="spacingAndGlyphs" xml:space="preserve">10</text>
<text x="193.30" y="274.9" font-size="17" fill="#000" stroke="#fff" stroke-width="0.28" textLength="9.74" lengthAdjust="spacingAndGlyphs" xml:space="preserve">5</text>
<text x="173.28" y="383.7" font-size="17" fill="#000" stroke="#fff" stroke-width="0.28" textLength="19.30" lengthAdjust="spacingAndGlyphs" xml:space="preserve">10</text>
<text x="193.38" y="375.7" font-size="17" fill="#000" stroke="#fff" stroke-width="0.28" textLength="10.15" lengthAdjust="spacingAndGlyphs" xml:space="preserve">4</text>
<text x="-298.44" y="0" font-size="17" fill="#000" stroke="#fff" stroke-width="0.28" textLength="21.41" lengthAdjust="spacingAndGlyphs" transform="translate(160.75,0) rotate(-90)" xml:space="preserve">Hz</text>
<text x="316.16" y="187" font-size="17" fill="#000" stroke="#fff" stroke-width="0.28" textLength="274.14" lengthAdjust="spacingAndGlyphs" xml:space="preserve">RBSP-A/EMFISIS  HFR Spectra Data</text>
<text x="216.00" y="408.6" font-size="17" fill="#000" stroke="#fff" stroke-width="0.28" textLength="45.01" lengthAdjust="spacingAndGlyphs" xml:space="preserve">00:00</text>
<text x="215.80" y="424.6" font-size="17" fill="#000" stroke="#fff" stroke-width="0.28" textLength="91.19" lengthAdjust="spacingAndGlyphs" xml:space="preserve">2012-12-02</text>
<text x="647.90" y="408.5" font-size="17" fill="#000" stroke="#fff" stroke-width="0.28" textLength="44.90" lengthAdjust="spacingAndGlyphs" xml:space="preserve">00:00</text>
<text x="647.69" y="424.5" font-size="17" fill="#000" stroke="#fff" stroke-width="0.28" textLength="92.10" lengthAdjust="spacingAndGlyphs" xml:space="preserve">2012-12-03</text>
<text x="294.42" y="413.5" font-size="17" fill="#000" stroke="#fff" stroke-width="0.28" textLength="98.20" lengthAdjust="spacingAndGlyphs" xml:space="preserve">RBSP-A/HOPE</text>
<text x="584.12" y="413.5" font-size="17" fill="#000" stroke="#fff" stroke-width="0.28" textLength="26.49" lengthAdjust="spacingAndGlyphs" xml:space="preserve">par</text>
<rect x="704" y="198" width="16" height="179.5" fill="url(#cbar)"/>
<line x1="720.5" y1="197.5" x2="720.5" y2="378" stroke="#000" stroke-width="1"/>
<line x1="704" y1="377.5" x2="721" y2="377.5" stroke="#000" stroke-width="1"/>
<line x1="720.5" y1="377.5" x2="732.0" y2="377.5" stroke="#000" stroke-width="1"/>
<text x="736.27" y="386.5" font-size="17" fill="#000" stroke="#fff" stroke-width="0.28" textLength="19.41" lengthAdjust="spacingAndGlyphs" xml:space="preserve">10</text>
<text x="756.23" y="378.5" font-size="17" fill="#000" stroke="#fff" stroke-width="0.28" textLength="25.15" lengthAdjust="spacingAndGlyphs" xml:space="preserve">-22</text>
<line x1="720.5" y1="363.5" x2="726.0" y2="363.5" stroke="#000" stroke-width="1"/>
<line x1="720.5" y1="350.5" x2="732.0" y2="350.5" stroke="#000" stroke-width="1"/>
<text x="736.27" y="359.9" font-size="17" fill="#000" stroke="#fff" stroke-width="0.28" textLength="19.41" lengthAdjust="spacingAndGlyphs" xml:space="preserve">10</text>
<text x="756.23" y="351.9" font-size="17" fill="#000" stroke="#fff" stroke-width="0.28" textLength="24.94" lengthAdjust="spacingAndGlyphs" xml:space="preserve">-20</text>
<line x1="720.5" y1="337.5" x2="726.0" y2="337.5" stroke="#000" stroke-width="1"/>
<line x1="720.5" y1="323.5" x2="732.0" y2="323.5" stroke="#000" stroke-width="1"/>
<text x="736.27" y="333.3" font-size="17" fill="#000" stroke="#fff" stroke-width="0.28" textLength="19.41" lengthAdjust="spacingAndGlyphs" xml:space="preserve">10</text>
<text x="756.23" y="325.3" font-size="17" fill="#000" stroke="#fff" stroke-width="0.28" textLength="25.02" lengthAdjust="spacingAndGlyphs" xml:space="preserve">-18</text>
<line x1="720.5" y1="310.5" x2="726.0" y2="310.5" stroke="#000" stroke-width="1"/>
<line x1="720.5" y1="297.5" x2="732.0" y2="297.5" stroke="#000" stroke-width="1"/>
<text x="736.27" y="306.7" font-size="17" fill="#000" stroke="#fff" stroke-width="0.28" textLength="19.41" lengthAdjust="spacingAndGlyphs" xml:space="preserve">10</text>
<text x="756.23" y="298.7" font-size="17" fill="#000" stroke="#fff" stroke-width="0.28" textLength="25.03" lengthAdjust="spacingAndGlyphs" xml:space="preserve">-16</text>
<line x1="720.5" y1="283.5" x2="726.0" y2="283.5" stroke="#000" stroke-width="1"/>
<line x1="720.5" y1="270.5" x2="732.0" y2="270.5" stroke="#000" stroke-width="1"/>
<text x="736.27" y="280.1" font-size="17" fill="#000" stroke="#fff" stroke-width="0.28" textLength="19.41" lengthAdjust="spacingAndGlyphs" xml:space="preserve">10</text>
<text x="756.24" y="272.1" font-size="17" fill="#000" stroke="#fff" stroke-width="0.28" textLength="24.76" lengthAdjust="spacingAndGlyphs" xml:space="preserve">-14</text>
<line x1="720.5" y1="257.5" x2="726.0" y2="257.5" stroke="#000" stroke-width="1"/>
<line x1="720.5" y1="244.5" x2="732.0" y2="244.5" stroke="#000" stroke-width="1"/>
<text x="736.27" y="253.5" font-size="17" fill="#000" stroke="#fff" stroke-width="0.28" textLength="19.41" lengthAdjust="spacingAndGlyphs" xml:space="preserve">10</text>
<text x="756.23" y="245.5" font-size="17" fill="#000" stroke="#fff" stroke-width="0.28" textLength="25.15" lengthAdjust="spacingAndGlyphs" xml:space="preserve">-12</text>
<line x1="720.5" y1="230.5" x2="726.0" y2="230.5" stroke="#000" stroke-width="1"/>
<line x1="720.5" y1="217.5" x2="732.0" y2="217.5" stroke="#000" stroke-width="1"/>
<text x="736.27" y="226.9" font-size="17" fill="#000" stroke="#fff" stroke-width="0.28" textLength="19.41" lengthAdjust="spacingAndGlyphs" xml:space="preserve">10</text>
<text x="756.23" y="218.9" font-size="17" fill="#000" stroke="#fff" stroke-width="0.28" textLength="24.94" lengthAdjust="spacingAndGlyphs" xml:space="preserve">-10</text>
<line x1="720.5" y1="204.5" x2="726.0" y2="204.5" stroke="#000" stroke-width="1"/>
<text x="-338.38" y="0" font-size="17" fill="#000" stroke="#fff" stroke-width="0.28" textLength="102.54" lengthAdjust="spacingAndGlyphs" transform="translate(805.3,0) rotate(-90)" xml:space="preserve">V^2/m^2/Hz</text>
<rect x="219.5" y="440.5" width="469" height="181" fill="none" stroke="#000" stroke-width="1"/>
<line x1="214.0" y1="621.5" x2="219.5" y2="621.5" stroke="#000" stroke-width="1"/>
<line x1="208.5" y1="599.5" x2="219.5" y2="599.5" stroke="#000" stroke-width="1"/>
<text x="178.47" y="605.0" font-size="17" fill="#000" stroke="#fff" stroke-width="0.28" textLength="24.20" lengthAdjust="spacingAndGlyphs" xml:space="preserve">1.2</text>
<line x1="214.0" y1="580.5" x2="219.5" y2="580.5" stroke="#000" stroke-width="1"/>
<line x1="208.5" y1="562.5" x2="219.5" y2="562.5" stroke="#000" stroke-width="1"/>
<text x="178.50" y="567.3" font-size="17" fill="#000" stroke="#fff" stroke-width="0.28" textLength="23.81" lengthAdjust="spacingAndGlyphs" xml:space="preserve">1.4</text>
<line x1="214.0" y1="545.5" x2="219.5" y2="545.5" stroke="#000" stroke-width="1"/>
<line x1="208.5" y1="529.5" x2="219.5" y2="529.5" stroke="#000" stroke-width="1"/>
<text x="178.48" y="534.7" font-size="17" fill="#000" stroke="#fff" stroke-width="0.28" textLength="24.08" lengthAdjust="spacingAndGlyphs" xml:space="preserve">1.6</text>
<line x1="214.0" y1="514.5" x2="219.5" y2="514.5" stroke="#000" stroke-width="1"/>
<line x1="208.5" y1="500.5" x2="219.5" y2="500.5" stroke="#000" stroke-width="1"/>
<text x="178.48" y="505.9" font-size="17" fill="#000" stroke="#fff" stroke-width="0.28" textLength="24.07" lengthAdjust="spacingAndGlyphs" xml:space="preserve">1.8</text>
<line x1="214.0" y1="487.5" x2="219.5" y2="487.5" stroke="#000" stroke-width="1"/>
<line x1="208.5" y1="475.5" x2="219.5" y2="475.5" stroke="#000" stroke-width="1"/>
<text x="177.91" y="480.1" font-size="17" fill="#000" stroke="#fff" stroke-width="0.28" textLength="24.58" lengthAdjust="spacingAndGlyphs" xml:space="preserve">2.0</text>
<line x1="214.0" y1="463.5" x2="219.5" y2="463.5" stroke="#000" stroke-width="1"/>
<line x1="208.5" y1="451.5" x2="219.5" y2="451.5" stroke="#000" stroke-width="1"/>
<text x="177.90" y="456.8" font-size="17" fill="#000" stroke="#fff" stroke-width="0.28" textLength="24.79" lengthAdjust="spacingAndGlyphs" xml:space="preserve">2.2</text>
<line x1="214.0" y1="440.5" x2="219.5" y2="440.5" stroke="#000" stroke-width="1"/>
<text x="-580.72" y="0" font-size="17" fill="#000" stroke="#fff" stroke-width="0.28" textLength="98.61" lengthAdjust="spacingAndGlyphs" transform="translate(165.7,0) rotate(-90)" xml:space="preserve">e Tperp/Tpar</text>
<path d="M219.6 493.8L219.9 546.1L220.5 487.1L220.8 521.8L221.4 482.6L221.8 517.1L222.3 479.4L222.7 511.5L223.2 474.0L223.6 511.7L224.1 479.5L224.5 517.7L225.0 483.2L225.4 507.9L225.9 474.4L226.3 510.8L226.8 464.8L227.2 506.2L227.7 467.0L228.1 498.3L228.6 466.8L229.0 507.2L229.5 474.2L229.9 502.1L230.4 460.5L230.8 513.8L231.3 464.9L231.7 501.0L232.2 457.0L232.6 498.5L233.1 467.1L233.5 498.5L234.0 464.5L234.4 495.2L234.9 469.9L235.3 499.1L235.8 470.4L236.2 490.9L236.7 479.7L237.1 501.9L237.6 459.7L238.0 495.3L238.5 481.3L238.9 505.7L239.4 484.3L239.8 522.0L240.3 484.7L240.7 510.6L241.2 492.7L241.6 508.6L242.1 495.9L242.5 515.9L243.0 499.3L243.4 520.4L243.9 498.8L244.3 520.9L244.8 503.6L245.2 524.0L245.7 505.3L246.1 520.0L246.6 509.9L247.0 540.8L247.5 514.6L247.9 535.9L248.4 516.7L248.8 532.0L249.3 523.4L249.7 535.6L250.2 528.3L250.6 542.9L251.1 526.9L251.5 554.0L252.0 535.0L252.4 549.2L252.9 534.3L253.3 549.1L253.8 539.4L254.2 548.7L254.7 540.6L255.1 548.4L255.6 540.9L256.0 551.8L256.5 543.0L256.9 558.3L257.4 533.0L257.8 556.6L258.3 544.1L258.7 557.0L259.2 539.3L259.6 558.2L260.1 540.2L260.5 557.8L261.0 552.6L261.4 562.6L261.9 551.2L262.3 564.1L262.8 554.0L263.2 562.6L263.7 556.5L264.1 562.2L264.6 554.0L265.0 567.9L265.5 558.8L265.9 574.7L266.4 559.0L266.8 565.4L267.3 559.9L267.6 568.2L268.2 559.7L268.5 570.7L269.1 562.2L269.4 568.8L270.0 559.7L270.3 570.1L270.9 561.5L271.2 569.2L271.8 562.4L272.1 573.1L272.7 564.7L273.0 571.2L273.6 565.2L273.9 574.3L274.5 565.1L274.8 575.3L275.4 563.8L275.7 574.0L276.3 564.2L276.6 582.3L277.2 565.3L277.5 574.2L278.1 569.0L278.4 574.5L279.0 570.0L279.3 579.3L279.9 571.1L280.2 577.4L280.8 569.6L281.1 579.3L281.7 569.7L282.0 579.7L282.6 567.8L282.9 578.3L283.5 571.2L283.8 581.7L284.4 568.8L284.7 576.7L285.3 570.5L285.6 581.2L286.2 566.2L286.5 579.7L287.1 568.6L287.4 592.2L288.0 569.0L288.3 577.4L288.9 569.5L289.2 580.1L289.8 568.7L290.1 580.4L290.7 567.4L291.0 580.6L291.6 565.8L291.9 579.6L292.5 566.0L292.8 575.4L293.4 567.6L293.7 578.2L294.3 562.0L294.6 578.4L295.2 564.5L295.5 572.0L296.1 559.7L296.4 573.3L297.0 555.5L297.3 575.4L297.9 559.2L298.2 581.4L298.8 554.6L299.1 566.0L299.7 556.6L300.0 576.3L300.6 547.8L300.9 571.0L301.5 547.9L301.8 565.9L302.4 547.5L302.7 565.8L303.3 548.4L303.6 566.0L304.2 548.1L304.5 562.0L305.1 543.1L305.4 559.8L306.0 547.1L306.3 557.9L306.9 543.6L307.2 560.6L307.8 534.5L308.1 564.2L308.7 548.2L309.0 562.4L309.6 545.4L309.9 567.7L310.5 536.5L310.8 566.5L311.4 545.6L311.7 574.6L312.3 548.1L312.6 568.0L313.2 550.5L313.5 569.1L314.1 554.1L314.4 568.2L315.0 548.1L315.3 573.2L315.9 541.9L316.2 567.9L316.8 543.7L317.1 566.9L317.7 535.2L318.0 556.6L318.6 534.7L318.9 561.2L319.5 530.6L319.8 560.8L320.4 526.5L320.7 548.0L321.3 528.8L321.6 546.5L322.2 521.4L322.5 553.4L323.1 518.4L323.4 542.0L324.0 515.8L324.3 541.0L324.9 513.4L325.2 540.2L325.8 510.4L326.1 528.3L326.7 506.5L327.0 528.8L327.6 497.2L327.9 518.9L328.5 498.1L328.8 514.2L329.4 492.8L329.7 515.5L330.3 490.0L330.6 509.5L331.2 481.3L331.5 511.6L332.1 481.8L332.4 499.8L333.0 458.1L333.3 519.5L333.9 475.0L334.2 514.6L334.8 474.6L335.1 493.2L335.7 468.7L336.0 490.4L336.6 459.7L336.9 499.0L337.5 460.7L337.8 492.6L338.4 470.4L338.7 493.2L339.3 452.5L339.6 494.7L340.2 475.6L340.5 502.1L341.1 462.0L341.4 510.2L342.0 467.9L342.3 501.0L342.9 456.3L343.2 493.7L343.8 463.7L344.1 501.5L344.7 470.1L345.0 515.7L345.6 471.9L345.9 501.8L346.5 473.9L346.8 502.0L347.4 473.8L347.7 498.4L348.3 459.8L348.6 496.9L349.2 484.0L349.5 505.8L350.1 485.7L350.4 509.6L351.0 487.1L351.3 515.6L351.9 473.3L352.2 507.9L352.8 493.6L353.1 510.8L353.7 488.0L354.0 519.4L354.6 488.2L354.9 525.5L355.5 486.0L355.8 522.1L356.4 501.6L356.7 540.7L357.3 518.5L357.6 540.2L358.2 528.0L358.5 547.9L359.1 544.8L359.4 556.0L360.0 548.6L360.3 566.1M373.3 492.3L373.7 548.7L374.2 481.3L374.6 529.6L375.1 486.2L375.4 521.5L376.0 486.5L376.3 518.5L376.9 487.2L377.2 510.7L377.8 483.7L378.1 495.3L378.7 483.4L379.0 498.6L379.6 478.8L379.9 497.9L380.5 473.8L380.8 499.8L381.4 475.5L381.7 492.6L382.3 470.9L382.6 494.0L383.2 469.7L383.5 489.0L384.1 478.3L384.4 496.3L385.0 477.4L385.3 491.7L385.9 477.0L386.2 489.7L386.8 470.4L387.1 488.0L387.7 466.1L388.0 489.3L388.6 469.6L388.9 496.7L389.5 471.5L389.8 495.7L390.4 463.8L390.7 492.5L391.3 471.1L391.6 501.0L392.2 474.2L392.5 496.4L393.1 472.7L393.4 493.3L394.0 466.8L394.3 504.2L394.9 472.1L395.2 494.8L395.8 470.2L396.1 496.8L396.7 471.6L397.0 501.2L397.6 474.3L397.9 506.5L398.5 483.3L398.8 499.1L399.4 483.3L399.7 505.7L400.3 487.2L400.6 501.2L401.2 487.2L401.5 498.3L402.1 487.3L402.4 504.6L403.0 489.2L403.3 501.4L403.9 485.3L404.2 500.4L404.8 487.2L405.1 501.7L405.7 482.1L406.0 498.7L406.6 482.4L406.9 493.3L407.5 482.2L407.8 498.5L408.4 480.0L408.7 497.6L409.3 474.2L409.6 489.2L410.2 475.7L410.5 490.8L411.1 471.3L411.4 486.4L412.0 471.6L412.3 488.7L412.9 467.9L413.2 485.6L413.8 472.2L414.1 485.6L414.7 475.6L415.0 486.2L415.6 478.0L415.9 489.4L416.5 475.5L416.8 488.9L417.4 475.2L417.7 495.6L418.3 478.5L418.6 492.0L419.2 481.8L419.5 493.6L420.1 481.5L420.4 494.8L421.0 487.2L421.3 499.5L421.9 486.9L422.2 501.2L422.8 488.0L423.1 503.3L423.7 484.4L424.0 501.0L424.6 492.0L424.9 499.9L425.5 486.8L425.8 515.7L426.4 492.4L426.7 501.5L427.3 493.5L427.6 505.3L428.2 494.8L428.5 502.6L429.1 490.8L429.4 507.1L430.0 496.5L430.3 517.5L430.9 497.0L431.2 510.8L431.8 493.6L432.1 517.8L432.7 498.6L433.0 508.7L433.6 499.2L433.9 510.1L434.5 494.6L434.8 515.0L435.4 494.3L435.7 513.6L436.3 491.5L436.6 511.9L437.2 497.3L437.5 511.5L438.1 488.0L438.4 513.8L439.0 490.7L439.3 507.3L439.9 491.5L440.2 514.3L440.8 497.6L441.1 513.3L441.7 492.4L442.0 507.6L442.6 493.4L442.9 510.4L443.5 492.5L443.8 510.8L444.4 493.4L444.7 513.2L445.3 492.0L445.6 514.1L446.2 492.9L446.5 523.2L447.1 497.9L447.4 508.5L448.0 495.6L448.3 514.3L448.9 496.9L449.2 508.8L449.8 493.2L450.1 507.8L450.7 483.7L451.0 510.8L451.6 492.0L451.9 508.0L452.5 491.0L452.8 508.5L453.4 495.5L453.7 510.6L454.3 492.6L454.6 503.1L455.2 490.2L455.5 502.3L456.1 488.6L456.4 509.3L457.0 482.8L457.3 502.7L457.9 478.3L458.2 506.2L458.8 480.8L459.1 497.9L459.7 479.1L460.0 495.6L460.6 480.9L460.9 499.5L461.5 479.9L461.8 508.7L462.4 490.4L462.7 511.6L463.3 469.8L463.6 510.5L464.2 485.6L464.5 510.4L465.1 492.6L465.4 517.4L466.0 494.7L466.3 529.7L466.9 495.0L467.2 511.5L467.8 495.7L468.1 515.4L468.7 499.2L469.0 525.2L469.6 493.3L469.9 516.3L470.5 494.3L470.8 524.3L471.4 500.8L471.7 520.1L472.3 493.4L472.6 510.4L473.2 495.8L473.5 513.5L474.1 488.9L474.4 529.0L475.0 492.1L475.3 511.3L475.9 486.6L476.2 507.3L476.8 485.9L477.1 505.4L477.7 487.2L478.0 512.2L478.6 490.6L478.9 510.3L479.5 491.8L479.8 508.0L480.4 494.4L480.7 519.0L481.3 493.1L481.6 520.2L482.2 494.2L482.5 522.7L483.1 493.9L483.4 526.3L484.0 501.5L484.3 524.3L484.9 508.7L485.2 543.2L485.8 508.1L486.1 527.0L486.7 507.7L487.0 524.0L487.6 502.1L487.9 526.5L488.5 503.1L488.8 525.5L489.4 499.5L489.7 524.8L490.3 498.6L490.6 520.7L491.2 492.7L491.5 529.9L492.1 476.5L492.4 520.1L493.0 494.7L493.3 525.8L493.9 484.3L494.2 525.1L494.8 485.1L495.1 523.3L495.7 488.5L496.0 512.9L496.6 488.3L496.9 508.0L497.5 476.0L497.8 506.3L498.4 487.5L498.7 508.6L499.3 475.3L499.6 507.6L500.2 477.6L500.5 513.4L501.1 473.2L501.4 512.5L502.0 476.3L502.3 503.2L502.9 478.9L503.2 509.3L503.8 475.1L504.1 525.5L504.7 479.9L505.0 503.4L505.6 471.8L505.9 504.4L506.5 473.2L506.8 505.5L507.4 482.7L507.7 518.1L508.3 477.5L508.6 507.5L509.2 474.7L509.5 497.4L510.1 472.9L510.4 506.7L511.0 474.9L511.3 506.3L511.9 485.0L512.2 510.4L512.8 488.3L513.1 520.1L513.7 488.3L514.0 523.1L514.6 488.8L514.9 517.4L515.5 490.1L515.8 517.5L516.4 494.2L516.7 550.0L517.3 493.4L517.6 535.5L518.2 496.8L518.5 543.5L519.1 497.3L519.4 539.8L520.0 517.0L520.3 550.7L520.9 528.1L521.2 548.5L521.8 527.7L522.1 548.0L522.7 540.5L523.0 556.6M534.7 530.6L535.1 571.0L535.6 520.4L536.0 547.5L536.5 520.1L536.9 549.5L537.4 501.1L537.8 536.6L538.3 495.7L538.6 542.5L539.2 500.5L539.5 517.2L540.1 493.3L540.4 522.2L541.0 485.2L541.3 507.9L541.9 479.5L542.2 511.8L542.8 482.6L543.1 503.6L543.7 471.8L544.0 499.4L544.6 478.4L544.9 501.1L545.5 470.8L545.8 492.6L546.4 475.5L546.7 489.5L547.3 476.3L547.6 497.6L548.2 457.0L548.5 488.0L549.1 453.5L549.4 489.6L550.0 478.2L550.3 491.1L550.9 474.9L551.2 504.3L551.8 487.1L552.1 506.4L552.7 493.8L553.0 520.2L553.6 498.6L553.9 513.1L554.5 496.9L554.8 517.3L555.4 507.4L555.7 541.1L556.3 511.7L556.6 526.2L557.2 515.2L557.5 532.2L558.1 521.3L558.4 541.3L559.0 521.8L559.3 538.7L559.9 524.0L560.2 541.1L560.8 529.5L561.1 549.5L561.7 532.2L562.0 554.1L562.6 534.5L562.9 553.3L563.5 534.8L563.8 549.1L564.4 530.4L564.7 556.0L565.3 535.7L565.6 563.9L566.2 547.9L566.5 565.7L567.1 549.8L567.4 566.7L568.0 556.3L568.3 579.8L568.9 562.9L569.2 580.1L569.8 562.9L570.1 585.7L570.7 565.4L571.0 587.3L571.6 567.1L571.9 592.5L572.5 574.4L572.8 608.4L573.4 570.5L573.7 589.6L574.3 571.7L574.6 589.0L575.2 577.1L575.5 599.0L576.1 579.1L576.4 597.7L577.0 572.2L577.3 599.9L577.9 577.5L578.2 591.1L578.8 577.7L579.1 597.6L579.7 579.9L580.0 595.2L580.6 582.8L580.9 597.5L581.5 584.5L581.8 601.5L582.4 570.9L582.7 596.0L583.3 584.8L583.6 595.9L584.2 581.4L584.5 599.3L585.1 584.1L585.4 611.4L586.0 581.5L586.3 617.5L586.9 584.6L587.2 606.0L587.8 581.8L588.1 597.8L588.7 584.2L589.0 596.2L589.6 582.4L589.9 601.7L590.5 579.3L590.8 601.9L591.4 581.5L591.7 600.9L592.3 585.4L592.6 604.7L593.2 584.0L593.5 603.0L594.1 584.0L594.4 604.4L595.0 587.6L595.3 598.4L595.9 583.9L596.2 600.5L596.8 578.8L597.1 597.0L597.7 584.3L598.0 602.2L598.6 577.2L598.9 596.4L599.5 576.2L599.8 594.3L600.4 580.4L600.7 597.7L601.3 582.5L601.6 597.4L602.2 575.8L602.5 599.4L603.1 576.1L603.4 598.6L604.0 577.8L604.3 592.6L604.9 576.5L605.2 596.3L605.8 578.0L606.1 595.8L606.7 574.5L607.0 590.1L607.6 576.1L607.9 590.7L608.5 580.1L608.8 593.5L609.4 573.2L609.7 594.0L610.3 575.6L610.6 587.9L611.2 575.2L611.5 588.1L612.1 572.2L612.4 592.0L613.0 578.2L613.3 593.8L613.9 576.8L614.2 585.4L614.8 575.2L615.1 585.6L615.7 573.2L616.0 586.9L616.6 569.7L616.9 586.5L617.5 576.4L617.8 586.3L618.4 572.5L618.7 584.3L619.3 567.7L619.6 587.2L620.2 568.1L620.5 599.8L621.1 569.1L621.4 583.1L622.0 564.9L622.3 583.9L622.9 562.3L623.2 580.1L623.8 560.8L624.1 574.3L624.7 560.7L625.0 579.4L625.6 562.4L625.9 578.8L626.5 558.4L626.8 570.2L627.4 560.4L627.7 573.4L628.3 557.6L628.6 572.0L629.2 554.0L629.5 571.4L630.1 550.3L630.4 564.2L631.0 546.5L631.3 562.4L631.9 545.2L632.2 561.7L632.8 550.9L633.1 564.1L633.7 545.8L634.0 560.9L634.6 543.4L634.9 557.3L635.5 540.5L635.8 560.6L636.4 541.1L636.7 555.5L637.3 543.2L637.6 551.8L638.2 541.3L638.5 549.6L639.1 536.0L639.4 547.9L640.0 540.7L640.3 553.9L640.9 542.6L641.2 551.6L641.8 546.5L642.1 557.1L642.7 536.4L643.0 566.0L643.6 546.4L643.9 569.0L644.5 549.4L644.8 574.8L645.4 554.7L645.7 576.1L646.3 547.8L646.6 584.2L647.2 561.1L647.5 586.6L648.1 562.8L648.4 579.0L649.0 558.1L649.3 586.2L649.9 558.8L650.2 596.3L650.8 550.7L651.1 578.1L651.7 546.1L652.0 579.7L652.6 551.9L652.9 578.9L653.5 561.0L653.8 586.9L654.4 557.6L654.7 580.5L655.3 554.8L655.6 587.0L656.2 554.3L656.5 577.0L657.1 555.1L657.4 573.4L658.0 545.6L658.3 569.4L658.9 550.4L659.2 566.3L659.8 534.3L660.1 572.3L660.7 536.6L661.0 562.1L661.6 531.9L661.9 563.9L662.5 530.9L662.8 559.5L663.4 523.2L663.7 548.4L664.3 511.0L664.6 546.5L665.2 502.9L665.5 539.6L666.1 515.6L666.4 539.7L667.0 502.1L667.3 532.6L667.9 509.2L668.2 533.6L668.8 503.5L669.1 530.4L669.7 485.4L670.0 521.7L670.6 489.6L670.9 518.7L671.5 488.5L671.8 524.3L672.4 494.4L672.7 515.6L673.3 494.7L673.6 538.8L674.2 497.2L674.5 541.8L675.1 489.6L675.4 523.2L676.0 493.0L676.3 529.4L676.9 500.8L677.2 521.6L677.8 494.5L678.1 531.2L678.7 497.3L679.0 525.3L679.6 505.1L679.9 537.4L680.5 499.5L680.8 547.6L681.4 523.5L681.7 541.9L682.3 519.1L682.6 551.5L683.2 524.1L683.5 574.4" fill="none" stroke="#000" stroke-width="1" stroke-linejoin="miter"/>
<polygon points="219.6,504.0 225.4,484.0 232.6,471.8 237.8,484.5 244,503.8 250.3,533.7 256.5,545.6 262.7,557.0 271,565.2 281.4,572.6 291.8,570.9 300,557.5 306.3,549.3 314.6,556.5 322.9,531.5 329,500.5 335.4,473.8 347.8,481.6 356,506.2 360.3,562.5 360.3,568.9 356,515.2 347.8,492.0 335.4,483.3 329,508.4 322.9,539.5 314.6,564.4 306.3,555.2 300,563.5 291.8,574.8 281.4,576.4 271,568.2 262.7,560.7 256.5,550.5 250.3,539.3 244,511.2 237.8,494.2 232.6,481.9 225.4,495.9 219.6,519.5" fill="#000"/>
<polygon points="373.3,503.7 377.5,486.5 385.8,478.0 390,477.2 394,481.3 403.4,492.4 412.7,475.7 423,491.6 433.5,500.7 443.9,499.0 452,500.7 459.4,484.7 468.8,506.7 477,494.8 487.4,514.5 497.8,490.7 510.3,482.2 518.6,515.8 522.7,542.4 522.7,550.2 518.6,528.2 510.3,492.4 497.8,501.7 487.4,523.5 477,501.7 468.8,514.7 459.4,493.2 452,506.2 443.9,505.9 433.5,506.2 423,496.6 412.7,481.3 403.4,497.9 394,491.7 390,486.8 385.8,485.0 377.5,493.4 373.3,521.7" fill="#000"/>
<polygon points="534.7,541.7 537.8,510.2 544,481.2 549.2,475.5 553.4,501.0 558.5,525.8 564.8,544.0 571,577.2 581.4,586.5 593.8,589.3 606.2,583.1 618.7,576.6 631.1,555.4 639.4,541.8 647.7,564.3 656,567.7 664.3,531.5 670.5,502.8 678.8,505.9 684,544.8 684,560.5 678.8,517.4 670.5,512.2 664.3,539.5 656,576.3 647.7,574.7 639.4,545.7 631.1,561.3 618.7,581.6 606.2,589.6 593.8,595.7 581.4,592.5 571,585.2 564.8,552.0 558.5,532.8 553.4,508.0 549.2,483.5 544,490.2 537.8,519.2 534.7,555.3" fill="#000"/>
<path d="M390.0 482.0L390.4 448.5M396.0 488.3L396.4 447.0M394.0 486.5L394.4 519.0M487.4 519.0L487.8 558.4M510.3 487.3L510.7 456.8M598.0 590.4L598.4 613.0M639.4 543.8L639.8 514.8M670.5 507.5L670.9 595.7M232.6 476.9L233.0 454.0M334.3 483.0L334.7 458.0M347.8 486.8L348.2 463.0M316.3 555.3L316.7 579.0M360.3 565.7L360.7 580.0M458.0 491.7L458.4 470.0M446.0 502.7L446.4 475.0M600.0 589.4L600.4 570.0M684.0 552.6L684.4 586.0M290.0 573.1L290.4 583.0M300.0 560.5L300.4 577.0" fill="none" stroke="#000" stroke-width="1.3"/>
<text x="215.90" y="652.7" font-size="17" fill="#000" stroke="#fff" stroke-width="0.28" textLength="45.11" lengthAdjust="spacingAndGlyphs" xml:space="preserve">00:00</text>
<text x="431.19" y="652.7" font-size="17" fill="#000" stroke="#fff" stroke-width="0.28" textLength="46.44" lengthAdjust="spacingAndGlyphs" xml:space="preserve">12:00</text>
<text x="647.39" y="652.7" font-size="17" fill="#000" stroke="#fff" stroke-width="0.28" textLength="45.73" lengthAdjust="spacingAndGlyphs" xml:space="preserve">00:00</text>
<text x="216.19" y="672.6" font-size="17" fill="#000" stroke="#fff" stroke-width="0.28" textLength="44.86" lengthAdjust="spacingAndGlyphs" xml:space="preserve">4.225</text>
<text x="431.87" y="672.6" font-size="17" fill="#000" stroke="#fff" stroke-width="0.28" textLength="45.84" lengthAdjust="spacingAndGlyphs" xml:space="preserve">5.756</text>
<text x="647.40" y="672.6" font-size="17" fill="#000" stroke="#fff" stroke-width="0.28" textLength="45.87" lengthAdjust="spacingAndGlyphs" xml:space="preserve">3.179</text>
<text x="200.00" y="692.5" font-size="17" fill="#000" stroke="#fff" stroke-width="0.28" textLength="61.00" lengthAdjust="spacingAndGlyphs" xml:space="preserve">-10.580</text>
<text x="425.49" y="692.5" font-size="17" fill="#000" stroke="#fff" stroke-width="0.28" textLength="51.95" lengthAdjust="spacingAndGlyphs" xml:space="preserve">-1.544</text>
<text x="631.49" y="692.5" font-size="17" fill="#000" stroke="#fff" stroke-width="0.28" textLength="61.62" lengthAdjust="spacingAndGlyphs" xml:space="preserve">-16.190</text>
<text x="215.68" y="712.7" font-size="17" fill="#000" stroke="#fff" stroke-width="0.28" textLength="45.53" lengthAdjust="spacingAndGlyphs" xml:space="preserve">2.247</text>
<text x="431.87" y="712.7" font-size="17" fill="#000" stroke="#fff" stroke-width="0.28" textLength="45.83" lengthAdjust="spacingAndGlyphs" xml:space="preserve">5.398</text>
<text x="647.30" y="712.7" font-size="17" fill="#000" stroke="#fff" stroke-width="0.28" textLength="45.87" lengthAdjust="spacingAndGlyphs" xml:space="preserve">8.125</text>
<text x="216.19" y="732.6" font-size="17" fill="#000" stroke="#fff" stroke-width="0.28" textLength="44.90" lengthAdjust="spacingAndGlyphs" xml:space="preserve">4.373</text>
<text x="431.87" y="732.6" font-size="17" fill="#000" stroke="#fff" stroke-width="0.28" textLength="45.75" lengthAdjust="spacingAndGlyphs" xml:space="preserve">5.760</text>
<text x="647.40" y="732.6" font-size="17" fill="#000" stroke="#fff" stroke-width="0.28" textLength="45.92" lengthAdjust="spacingAndGlyphs" xml:space="preserve">3.447</text>
<text x="156.29" y="672.6" font-size="17" fill="#000" stroke="#fff" stroke-width="0.28" textLength="11.55" lengthAdjust="spacingAndGlyphs" xml:space="preserve">R</text>
<text x="168.03" y="677.6" font-size="9.5" font-weight="bold" fill="#000" textLength="6.66" lengthAdjust="spacingAndGlyphs" xml:space="preserve">E</text>
<text x="137.23" y="692.5" font-size="17" fill="#000" stroke="#fff" stroke-width="0.28" textLength="37.19" lengthAdjust="spacingAndGlyphs" xml:space="preserve">MLat</text>
<text x="143.18" y="712.7" font-size="17" fill="#000" stroke="#fff" stroke-width="0.28" textLength="32.19" lengthAdjust="spacingAndGlyphs" xml:space="preserve">MLT</text>
<text x="164.81" y="732.6" font-size="17" fill="#000" stroke="#fff" stroke-width="0.28" textLength="10.09" lengthAdjust="spacingAndGlyphs" xml:space="preserve">L</text>
<text x="251.89" y="756.8" font-size="17" fill="#000" stroke="#fff" stroke-width="0.28" textLength="404.21" lengthAdjust="spacingAndGlyphs" xml:space="preserve">2012-12-01 (336) 23:00 to 2012-12-03 (338) 01:00</text>
<rect x="346.5" y="358.5" width="245" height="88.5" rx="3" fill="#f8f8f8" stroke="#a8a8a8" stroke-width="2"/>
<path d="M348 384 L348 363 Q348 360 351 360 L587 360 Q590 360 590 363 L590 384 Z" fill="url(#dlgtitle)"/>
<path d="M360 370 L368 370 L364 375 Z" fill="#9a9a9a"/>
<text x="410.57" y="377.8" font-size="13.5" font-weight="bold" fill="#6e6e78" textLength="115.24" lengthAdjust="spacingAndGlyphs" xml:space="preserve">Progress Monitor</text>
<path d="M569 369 L576.5 376.5 M576.5 369 L569 376.5" stroke="#9a9a9a" stroke-width="2"/>
<rect x="348" y="384" width="242" height="62" fill="#fbfbfb"/>
<text x="413.30" y="396.6" font-size="14.5" font-weight="bold" fill="#2a2a36" textLength="111.03" lengthAdjust="spacingAndGlyphs" xml:space="preserve">running batch</text>
<text x="363.23" y="408.8" font-size="9" font-weight="bold" fill="#1e1e28" textLength="213.64" lengthAdjust="spacingAndGlyphs" xml:space="preserve">write /hom...walk3/product_20121206_00.png</text>
<rect x="349.5" y="411.5" width="220" height="19" fill="#eeeeee" stroke="#7890aa" stroke-width="1"/>
<rect x="350.5" y="412.5" width="36" height="17" fill="#a2b6cc"/>
<rect x="570.5" y="411.5" width="18" height="19" fill="#dde8f3" stroke="#8aa0b8" stroke-width="1"/>
<rect x="572.5" y="414.5" width="13.5" height="13" rx="2.5" fill="#e0404a" stroke="#a02028" stroke-width="0.8"/>
<path d="M576 418 L582.5 424.5 M582.5 418 L576 424.5" stroke="#fff" stroke-width="2"/>
<text x="380.66" y="442" font-size="13" font-weight="bold" fill="#2a2a36" textLength="177.59" lengthAdjust="spacingAndGlyphs" xml:space="preserve">11/62 (1.4/sec, eta 36.9 s)</text>
</svg></body></html>
